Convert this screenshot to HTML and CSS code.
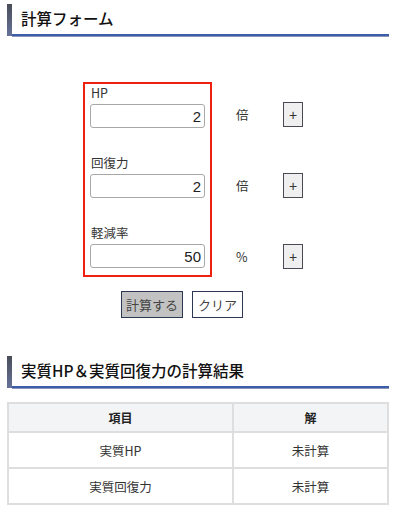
FILE: index.html
```html
<!DOCTYPE html>
<html lang="ja">
<head>
<meta charset="utf-8">
<link rel="stylesheet" href="styles.css">
</head>
<body>
<div class="heading heading-first">
  <span class="heading-bar"></span>
  <h2 class="heading-title">計算フォーム</h2>
</div>

<div class="form-area">
  <div class="form-box">
    <div class="field">
      <label class="field-label">HP</label>
      <input class="field-input" type="text" value="2">
    </div>
    <div class="field">
      <label class="field-label">回復力</label>
      <input class="field-input" type="text" value="2">
    </div>
    <div class="field">
      <label class="field-label">軽減率</label>
      <input class="field-input" type="text" value="50">
    </div>
  </div>
  <div class="side">
    <div class="side-row"><span class="unit">倍</span><button class="plus">+</button></div>
    <div class="side-row"><span class="unit">倍</span><button class="plus">+</button></div>
    <div class="side-row"><span class="unit">%</span><button class="plus">+</button></div>
  </div>
</div>

<div class="actions">
  <button class="btn btn-calc">計算する</button>
  <button class="btn btn-clear">クリア</button>
</div>

<div class="heading heading-second">
  <span class="heading-bar"></span>
  <h2 class="heading-title">実質HP＆実質回復力の計算結果</h2>
</div>

<table class="result">
  <thead>
    <tr><th class="col-item">項目</th><th>解</th></tr>
  </thead>
  <tbody>
    <tr><td>実質HP</td><td>未計算</td></tr>
    <tr><td>実質回復力</td><td>未計算</td></tr>
  </tbody>
</table>
</body>
</html>
```

FILE: styles.css
```css
* { box-sizing: border-box; }
html, body { margin: 0; padding: 0; background: #fff; }
body {
  font-family: "Noto Sans CJK JP", "Noto Sans", sans-serif;
  color: #333;
  width: 393px;
}

.heading {
  display: flex;
  margin: 0 4px 0 7px;
  height: 32px;
}
.heading-first { margin-top: 4px; }
.heading-second { margin-top: 38px; }
.heading-bar {
  width: 5px;
  background: linear-gradient(#4a4d58, #66729a);
}
.heading-title {
  flex: 1;
  margin: 0;
  padding-left: 9px;
  font-size: 15.5px;
  font-weight: 500;
  color: #111;
  line-height: 29px;
  border-bottom: 2px solid #3d5caa;
  box-shadow: 0 1px 0 #8a96b8;
}

.form-area {
  display: flex;
  margin-top: 46px;
  padding-left: 83px;
}
.form-box {
  width: 129px;
  border: 2px solid #f02010;
  padding: 1px 5px 7px 5px;
  display: flex;
  flex-direction: column;
  gap: 27px;
}
.field {
  display: flex;
  flex-direction: column;
  gap: 3px;
}
.field-label {
  font-size: 12.5px;
  line-height: 16px;
  color: #333;
  padding-left: 1px;
}
.field-input {
  width: 115px;
  height: 24px;
  border: 1px solid #a8a8a8;
  border-radius: 3px;
  text-align: right;
  font-family: "Liberation Sans", "Noto Sans", sans-serif;
  font-size: 15px;
  color: #222;
  padding: 0 3px 0 2px;
  background: #fff;
}
.side {
  display: flex;
  flex-direction: column;
  padding-top: 20px;
  gap: 46px;
}
.side-row {
  display: flex;
  align-items: center;
  height: 25px;
  padding-left: 24px;
}
.unit {
  width: 47px;
  font-size: 12.5px;
  color: #333;
}
.plus {
  width: 20px;
  height: 25px;
  padding: 0;
  border: 1px solid #4a4a55;
  border-radius: 0;
  background: #efefef;
  font-family: "Liberation Sans", sans-serif;
  font-size: 14px;
  color: #333;
}

.actions {
  display: flex;
  gap: 9px;
  margin-top: 14px;
  padding-left: 121px;
}
.btn {
  height: 27px;
  padding: 0;
  border: 1px solid #2c3655;
  border-radius: 0;
  font-family: "Noto Sans CJK JP", sans-serif;
  font-size: 13px;
  color: #444;
}
.btn-calc { width: 62px; background: #c2c2c2; }
.btn-clear { width: 51px; background: #fff; }

.result {
  margin: 14px 0 0 7px;
  width: 382px;
  border-collapse: collapse;
  font-size: 12.5px;
  color: #333;
}
.result th, .result td {
  border: 2px solid #dedede;
  text-align: center;
  font-weight: normal;
}
.result th {
  height: 29px;
  background: #f2f4f5;
  font-weight: bold;
  font-size: 12px;
  color: #222;
}
.result td { height: 36px; }
.col-item { width: 225px; }
```
